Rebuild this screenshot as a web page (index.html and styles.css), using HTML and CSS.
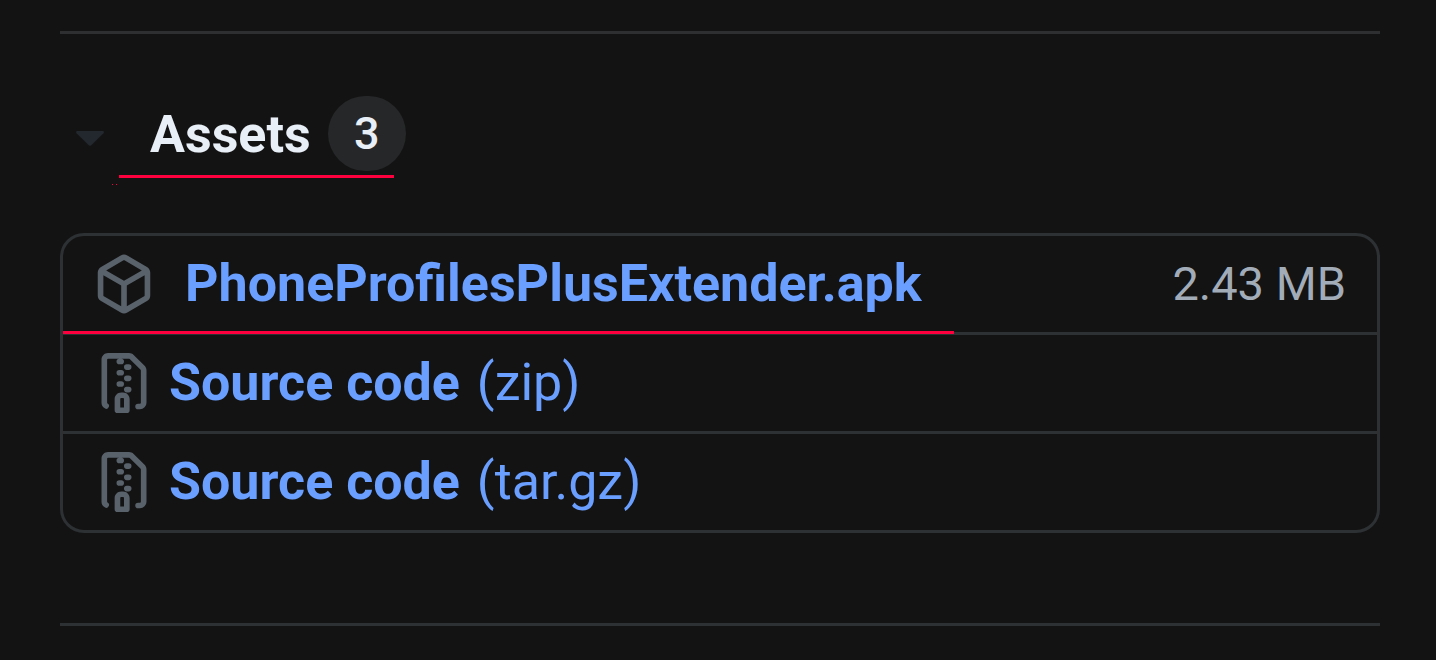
FILE: index.html
```html
<!DOCTYPE html>
<html lang="en">
<head>
<meta charset="utf-8">
<meta name="viewport" content="width=device-width, initial-scale=1">
<title>Release assets</title>
<link rel="stylesheet" href="styles.css">
</head>
<body>
<svg class="sprite" aria-hidden="true">
  <symbol id="package" viewBox="0 0 16 16"><path d="m8.878.392 5.25 3.045c.54.314.872.89.872 1.514v6.098a1.75 1.75 0 0 1-.872 1.514l-5.25 3.045a1.75 1.75 0 0 1-1.756 0l-5.25-3.045A1.75 1.75 0 0 1 1 11.049V4.951c0-.624.332-1.201.872-1.514L7.122.392a1.75 1.75 0 0 1 1.756 0ZM7.875 1.69l-4.63 2.685L8 7.133l4.755-2.758-4.63-2.685a.248.248 0 0 0-.25 0ZM2.5 5.677v5.372c0 .09.047.171.125.216l4.625 2.683V8.432Zm6.25 8.271 4.625-2.683a.25.25 0 0 0 .125-.216V5.677L8.75 8.432Z"/></symbol>
  <symbol id="file-zip" viewBox="0 0 16 16"><path d="M3.5 1.75v11.5c0 .09.048.173.126.217a.75.75 0 0 1-.752 1.298A1.748 1.748 0 0 1 2 13.25V1.75C2 .784 2.784 0 3.75 0h5.586c.464 0 .909.185 1.237.513l2.914 2.914c.329.328.513.773.513 1.237v8.586A1.75 1.75 0 0 1 12.25 15h-.5a.75.75 0 0 1 0-1.5h.5a.25.25 0 0 0 .25-.25V4.664a.25.25 0 0 0-.073-.177L9.513 1.573a.25.25 0 0 0-.177-.073H7.25a.75.75 0 0 1 0 1.5h-.5a.75.75 0 0 1 0-1.5h-3a.25.25 0 0 0-.25.25Zm3.75 8.75h.5c.966 0 1.75.784 1.75 1.75v3a.75.75 0 0 1-.75.75h-2.5a.75.75 0 0 1-.75-.75v-3c0-.966.784-1.75 1.75-1.75ZM6 5.25a.75.75 0 0 1 .75-.75h.5a.75.75 0 0 1 0 1.5h-.5A.75.75 0 0 1 6 5.25Zm.75 2.25h.5a.75.75 0 0 1 0 1.5h-.5a.75.75 0 0 1 0-1.5ZM8 6.75A.75.75 0 0 1 8.75 6h.5a.75.75 0 0 1 0 1.5h-.5A.75.75 0 0 1 8 6.75ZM8.75 3h.5a.75.75 0 0 1 0 1.5h-.5a.75.75 0 0 1 0-1.5ZM8 9.75A.75.75 0 0 1 8.75 9h.5a.75.75 0 0 1 0 1.5h-.5A.75.75 0 0 1 8 9.75Zm-1 2.5v2.25h1v-2.25a.25.25 0 0 0-.25-.25h-.5a.25.25 0 0 0-.25.25Z"/></symbol>
</svg>
<main class="release">
  <details class="assets" open>
    <summary class="assets-head">
      <svg class="caret" viewBox="0 0 28 15" aria-hidden="true"><path d="M1.5 0h25c1.3 0 1.9 1.3 1 2.2L15 14.4a1.5 1.5 0 0 1-2 0L.5 2.2C-.4 1.3.2 0 1.5 0Z"/></svg>
      <h3 class="title">Assets</h3>
      <span class="count">3</span>
      <span class="mark mark-head"></span>
      <span class="mark-dots"></span>
    </summary>
    <ul class="list">
      <li class="row">
        <svg class="icon" aria-hidden="true"><use href="#package"/></svg>
        <a class="link link-package" href="#"><b>PhoneProfilesPlusExtender.apk</b></a>
        <span class="size">2.43 MB</span>
        <span class="mark mark-row"></span>
      </li>
      <li class="row">
        <svg class="icon" aria-hidden="true"><use href="#file-zip"/></svg>
        <a class="link" href="#"><b class="name">Source code</b> (zip)</a>
      </li>
      <li class="row">
        <svg class="icon" aria-hidden="true"><use href="#file-zip"/></svg>
        <a class="link" href="#"><b class="name">Source code</b> (tar.gz)</a>
      </li>
    </ul>
  </details>
</main>
</body>
</html>
```
FILE: styles.css
```css
* {
  box-sizing: border-box;
}

body {
  margin: 0;
  background: #131313;
  color: #e9eff7;
  font-family: Roboto, "Liberation Sans", sans-serif;
}

.sprite {
  display: none;
}

.release {
  margin: 31px 56px 31px 60px;
  padding: 62px 0 90px;
  border-top: 3px solid #2d2f31;
  border-bottom: 3px solid #2d3134;
}

.assets-head {
  position: relative;
  display: flex;
  align-items: center;
  padding-left: 16px;
  list-style: none;
  cursor: pointer;
}

.assets-head::-webkit-details-marker {
  display: none;
}

.caret {
  width: 28px;
  height: 15px;
  margin: 9px 46px 0 0;
  fill: #22282d;
}

.title {
  margin: 0 17px 0 0;
  font-size: 52px;
  line-height: 77px;
  height: 75px;
  font-weight: 700;
}

.count {
  min-width: 78px;
  border-radius: 38px;
  background: #262729;
  font-size: 45px;
  line-height: 75px;
  font-weight: 500;
  text-align: center;
}

/* Highlighter strokes drawn over the content */
.mark {
  position: absolute;
  z-index: 1;
  height: 3px;
  background: #ff003e;
}

.mark-head {
  left: 59px;
  top: 79px;
  width: 275px;
}

.mark-dots {
  position: absolute;
  left: 52px;
  top: 88px;
  width: 5px;
  height: 1px;
  border: solid #ff003e;
  border-width: 0 1px;
}

.mark-row {
  left: 0;
  bottom: -2px;
  width: 891px;
}

.list {
  margin: 62px 0 0;
  padding: 0;
  border: 3px solid #2d3134;
  border-radius: 24px;
  list-style: none;
}

.row {
  position: relative;
  display: flex;
  align-items: center;
  padding: 18px 31px;
}

.row + .row {
  border-top: 3px solid #2d3134;
}

.icon {
  flex: none;
  width: 60px;
  height: 60px;
  margin-right: 15px;
  fill: #59626b;
}

.link {
  color: #6a9fff;
  font-size: 52px;
  line-height: 60px;
  text-decoration: none;
}

.link-package {
  margin-left: 16px;
}

.name {
  margin-right: 4px;
}

.size {
  margin-left: auto;
  color: #a2acb9;
  font-size: 47px;
  line-height: 60px;
}
```
